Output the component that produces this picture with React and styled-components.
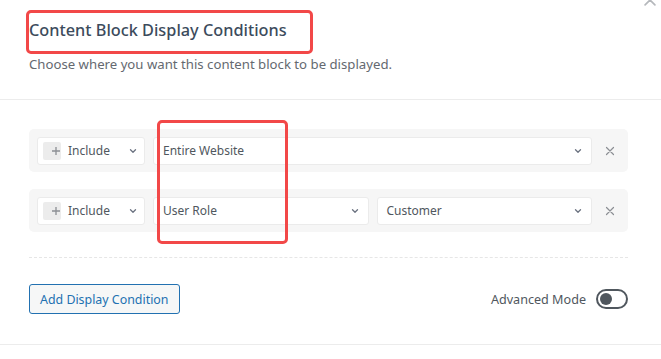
import styled, { createGlobalStyle } from 'styled-components'

const GlobalStyle = createGlobalStyle`
  html, body {
    margin: 0;
    padding: 0;
    background: #fff;
    font-family: "Noto Sans", "Open Sans", sans-serif;
  }
`

const Chevron = () => (
  <svg width="10" height="10" viewBox="0 0 10 10" fill="none">
    <path d="M2.5 3.8 L5 6.2 L7.5 3.8" stroke="#6b7280" strokeWidth="1.3" strokeLinecap="round" strokeLinejoin="round" />
  </svg>
)

const Cross = ({ size = 10, color = '#8c8f94' }) => (
  <svg width={size} height={size} viewBox="0 0 10 10" fill="none">
    <path d="M1.5 1.5 L8.5 8.5 M8.5 1.5 L1.5 8.5" stroke={color} strokeWidth="1.2" strokeLinecap="round" />
  </svg>
)

const Plus = () => (
  <svg width="10" height="10" viewBox="0 0 10 10" fill="none">
    <path d="M5 1 V9 M1 5 H9" stroke="#8c8f94" strokeWidth="1.3" />
  </svg>
)

const Select = ({ label }) => (
  <SelectBox>
    <span>{label}</span>
    <Chevron />
  </SelectBox>
)

const TypeField = () => (
  <TypeSelect>
    <PlusBtn><Plus /></PlusBtn>
    <span>Include</span>
    <Chevron />
  </TypeSelect>
)

const App = () => {
  return <Wrapper>
    <GlobalStyle />
    <CloseCorner><Cross size={14} color="#b5b8bc" /></CloseCorner>
    <Header>
      <Title>Content Block Display Conditions</Title>
      <Subtitle>Choose where you want this content block to be displayed.</Subtitle>
      <Highlight $left={26} $top={10} $width={287} $height={44} />
    </Header>
    <Body>
      <Rows>
        <Row>
          <TypeField />
          <Select label="Entire Website" />
          <Remove><Cross /></Remove>
        </Row>
        <Row>
          <TypeField />
          <Select label="User Role" />
          <Select label="Customer" />
          <Remove><Cross /></Remove>
        </Row>
        <Highlight $left={128} $top={-9} $width={131} $height={124} />
      </Rows>
      <Divider />
      <Footer>
        <AddButton>Add Display Condition</AddButton>
        <Advanced>
          Advanced Mode
          <Toggle><Knob /></Toggle>
        </Advanced>
      </Footer>
    </Body>
  </Wrapper>
}

const Wrapper = styled.main`
  position: relative;
  width: 661px;
  height: 359px;
  overflow: hidden;
  background: #fff;
`

const CloseCorner = styled.div`
  position: absolute;
  right: 4px;
  top: -10px;
`

const Header = styled.header`
  position: relative;
  padding: 17px 33px 25px 29px;
  border-bottom: 1px solid #ececec;
`

const Title = styled.h2`
  margin: 0;
  font-size: 16.3px;
  font-weight: 500;
  line-height: 26px;
  color: #3c4b5c;
`

const Subtitle = styled.p`
  margin: 11px 0 0;
  font-size: 13.2px;
  line-height: 20px;
  color: #646970;
`

const Highlight = styled.div`
  position: absolute;
  left: ${p => p.$left}px;
  top: ${p => p.$top}px;
  width: ${p => p.$width}px;
  height: ${p => p.$height}px;
  box-sizing: border-box;
  border: 3px solid #f24848;
  border-radius: 5px;
  pointer-events: none;
`

const Body = styled.section`
  padding: 29px 33px 0 29px;
  border-bottom: 1px solid #ececec;
`

const Rows = styled.div`
  position: relative;
  display: flex;
  flex-direction: column;
  gap: 17px;
`

const Row = styled.div`
  display: flex;
  align-items: center;
  gap: 8px;
  height: 43px;
  padding: 0 8px;
  background: #f6f6f6;
  border-radius: 5px;
`

const SelectBox = styled.div`
  display: flex;
  align-items: center;
  justify-content: space-between;
  box-sizing: border-box;
  height: 28px;
  padding: 0 8px 0 9px;
  flex: 1 1 0;
  background: #fff;
  border: 1px solid #ebebeb;
  border-radius: 3px;
  font-size: 12px;
  color: #50575e;
`

const TypeSelect = styled(SelectBox)`
  flex: 0 0 108px;
  padding-left: 5px;
  padding-right: 6px;
  justify-content: flex-start;
  span { margin-left: 7px; }
  svg:last-child { margin-left: auto; }
`

const PlusBtn = styled.span`
  display: flex;
  align-items: center;
  justify-content: center;
  width: 18px;
  height: 18px;
  background: #ececec;
  border-radius: 2px;
  && { margin-left: 0; }
`

const Remove = styled.div`
  display: flex;
  align-items: center;
  justify-content: center;
  flex: 0 0 20px;
  height: 28px;
`

const Divider = styled.div`
  margin-top: 25px;
  border-top: 1px dashed #e6e6e6;
`

const Footer = styled.div`
  display: flex;
  align-items: center;
  justify-content: space-between;
  padding: 26px 0 30px;
`

const AddButton = styled.button`
  height: 30px;
  padding: 0 10px;
  background: #f6f7f7;
  border: 1px solid #2271b1;
  border-radius: 3px;
  color: #2271b1;
  font-family: inherit;
  font-size: 12.4px;
`

const Advanced = styled.label`
  display: flex;
  align-items: center;
  gap: 10px;
  font-size: 12.6px;
  color: #50575e;
`

const Toggle = styled.span`
  display: flex;
  align-items: center;
  box-sizing: border-box;
  width: 32px;
  height: 20px;
  padding: 0 2px;
  border: 2px solid #50575e;
  border-radius: 10px;
`

const Knob = styled.span`
  width: 12px;
  height: 12px;
  border-radius: 50%;
  background: #50575e;
`

export default App
